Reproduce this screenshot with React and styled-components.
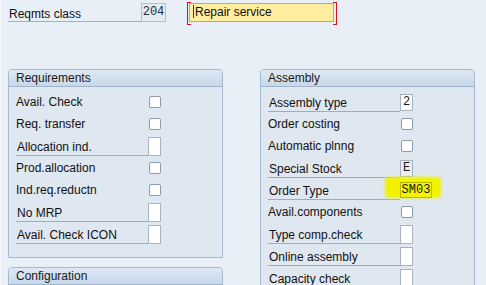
import React from 'react';
import styled, { createGlobalStyle, css } from 'styled-components';

const GlobalStyle = createGlobalStyle`
  html, body {
    margin: 0;
    padding: 0;
    background: #e9eff6;
    font-family: 'Liberation Sans', Arial, sans-serif;
    font-size: 12px;
    color: #111;
  }
`;

const Screen = styled.div`
  width: 486px;
  height: 285px;
  overflow: hidden;
  box-sizing: border-box;
  padding: 3px 0 0 7px;
  border-left: 1px solid #f6f8fb;
  background: #e9eff6;
`;

const TopRow = styled.div`
  display: flex;
  align-items: flex-end;
  height: 19px;
`;

const TopLabel = styled.div`
  width: 158px;
  height: 18px;
  line-height: 20px;
  padding-left: 1px;
  border-bottom: 1px solid #a7b0ba;
  box-sizing: border-box;
  position: relative;
`;

const DisplayField = styled.div`
  position: absolute;
  left: 133px;
  top: -1px;
  width: 25px;
  height: 19px;
  box-sizing: border-box;
  border: 1px solid #b4bec9;
  background: #e4ebf2;
  font-family: 'Liberation Mono', monospace;
  font-size: 12px;
  line-height: 17px;
  text-align: center;
  color: #1e2c3c;
`;

const Required = styled.div`
  position: relative;
  margin-left: 23px;
  width: 145px;
  height: 19px;
  box-sizing: border-box;
  border: 1px solid #a9a9a9;
  background: #ffeea0;
  padding-left: 3px;
  line-height: 17px;
  margin-bottom: 0;

  &::before, &::after {
    content: '';
    position: absolute;
    top: -2px;
    width: 3px;
    height: 21px;
    border: 1px solid #d4141c;
  }
  &::before {
    left: -3px;
    border-right: none;
  }
  &::after {
    right: -4px;
    border-left: none;
  }
`;

const Caret = styled.span`
  display: inline-block;
  width: 1px;
  height: 13px;
  background: #1d3a78;
  vertical-align: -2px;
  margin-right: 1px;
`;

const Columns = styled.div`
  display: flex;
  gap: 37px;
  margin-top: 47px;
  align-items: flex-start;
`;

const Column = styled.div`
  display: flex;
  flex-direction: column;
  gap: 9px;
  width: 215px;
`;

const Panel = styled.div`
  border: 1px solid #a4b9cf;
  border-radius: 4px 4px 0 0;
  background: #dfe7f0;
  padding-bottom: ${p => p.$bottom || 0}px;
`;

const Header = styled.div`
  height: 16px;
  line-height: 16px;
  padding-left: 7px;
  border-bottom: 1px solid #9fb5cc;
  border-radius: 3px 3px 0 0;
  background: linear-gradient(#dfe9f4, #c7d8ea);
  color: #1a1a1a;
`;

const Rows = styled.div`
  padding-top: 4px;
`;

const Row = styled.div`
  display: flex;
  align-items: center;
  height: 22px;
  padding-left: 7px;
`;

const Label = styled.div`
  width: 132px;
  box-sizing: border-box;
  ${p => p.$field ? css`
    height: 19px;
    line-height: 20px;
    padding-left: 1px;
    border-bottom: 1px solid #a3acb6;
    margin-top: 1px;
  ` : css`
    line-height: 22px;
  `}
`;

const Checkbox = styled.div`
  width: 12px;
  height: 12px;
  margin-left: 1px;
  box-sizing: border-box;
  border: 1px solid #8d9cad;
  border-radius: 2px;
  background: #fff;
`;

const Input = styled.div`
  position: relative;
  box-sizing: border-box;
  width: ${p => p.$w || 13}px;
  height: ${p => p.$h || 19}px;
  border: 1px solid ${p => p.$hl ? '#b8b800' : '#a9b3bd'};
  background: ${p => p.$hl ? '#f4f400' : p.$ro ? '#e6edf4' : '#fff'};
  font-family: 'Liberation Mono', monospace;
  font-size: 12px;
  line-height: ${p => (p.$h || 19) - 2}px;
  text-align: center;
  color: #1a1a1a;
`;

const Highlight = styled.div`
  position: relative;
  &::before {
    content: '';
    position: absolute;
    left: -15px;
    right: -9px;
    top: -5px;
    bottom: 0;
    background: #f2f200;
    filter: blur(1.5px);
    border-radius: 4px;
  }
`;

const Field = ({ value, w, h, ro }) => (
  <Input $w={w} $h={h} $ro={ro}>{value}</Input>
);

const requirements = [
  { label: 'Avail. Check', kind: 'cb' },
  { label: 'Req. transfer', kind: 'cb' },
  { label: 'Allocation ind.', kind: 'field' },
  { label: 'Prod.allocation', kind: 'cb' },
  { label: 'Ind.req.reductn', kind: 'cb' },
  { label: 'No MRP', kind: 'field' },
  { label: 'Avail. Check ICON', kind: 'field' },
];

const assembly = [
  { label: 'Assembly type', kind: 'field', value: '2', h: 17 },
  { label: 'Order costing', kind: 'cb' },
  { label: 'Automatic plnng', kind: 'cb' },
  { label: 'Special Stock', kind: 'field', value: 'E', h: 17, ro: true },
  { label: 'Order Type', kind: 'hl', value: 'SM03' },
  { label: 'Avail.components', kind: 'cb' },
  { label: 'Type comp.check', kind: 'field' },
  { label: 'Online assembly', kind: 'field' },
  { label: 'Capacity check', kind: 'field' },
];

const renderRow = (r) => (
  <Row key={r.label}>
    <Label $field={r.kind !== 'cb'}>{r.label}</Label>
    {r.kind === 'cb' && <Checkbox />}
    {r.kind === 'field' && <Field value={r.value} h={r.h} ro={r.ro} />}
    {r.kind === 'hl' && (
      <Highlight>
        <Input $hl $w={32} $h={16}>{r.value}</Input>
      </Highlight>
    )}
  </Row>
);

export default function App() {
  return (
    <>
      <GlobalStyle />
      <Screen>
        <TopRow>
          <TopLabel>
            Reqmts class
            <DisplayField>204</DisplayField>
          </TopLabel>
          <Required><Caret />Repair service</Required>
        </TopRow>
        <Columns>
          <Column>
            <Panel $bottom={12}>
              <Header>Requirements</Header>
              <Rows>{requirements.map(renderRow)}</Rows>
            </Panel>
            <Panel>
              <Header>Configuration</Header>
            </Panel>
          </Column>
          <Column>
            <Panel $bottom={10}>
              <Header>Assembly</Header>
              <Rows>{assembly.map(renderRow)}</Rows>
            </Panel>
          </Column>
        </Columns>
      </Screen>
    </>
  );
}
